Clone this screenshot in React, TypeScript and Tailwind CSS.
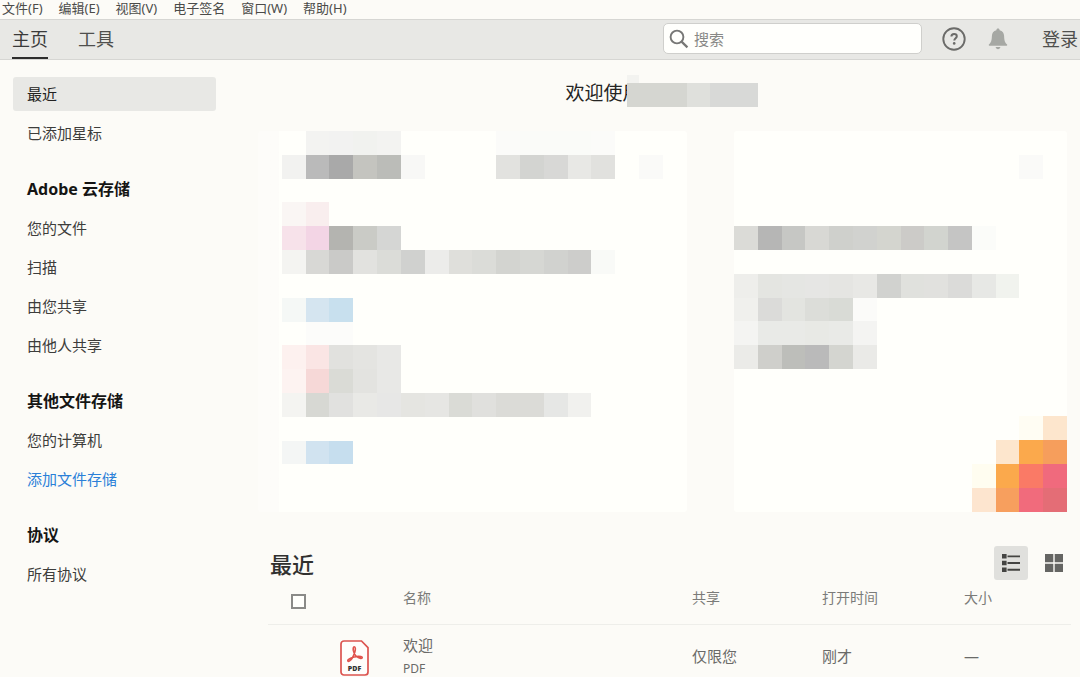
import React from "react";

type Cell = [col: number, row: number, colors: string];

const CELL = 24;

const leftCells: Cell[] = [
  [2, 0, "f3f3f1 f2f2f1 f1f2ef f3f3f1"],
  [10, 0, "fbfbf9 fafbf8 fafbf8 fafbf8 fbfbf9"],
  [1, 1, "f2f2f0 bababa a9a9a9 c4c4bf bbbcb8 f8f8f6"],
  [10, 1, "e2e2df d3d4d1 d8d8d6 e8e8e5 e1e1de"],
  [16, 1, "fafaf8"],
  [1, 3, "faf6f4 f9eeee"],
  [1, 4, "f7e2ea f3d5e5 b4b4b0 cacbc6 d5d6d4"],
  [1, 5, "f4f4f1 d8d8d5 cacac8 e2e2df dbdcd8 d0d1cf ececea dfdfdb dbdcd8 d3d4d0 d6d7d3 d1d2cf cdcdcb f9faf7"],
  [1, 7, "f5f8f6 d5e5f0 c8e0ee"],
  [2, 8, "fcfcfa fcfcfa"],
  [1, 9, "fdf1ef fae5e4 e1e1de e4e4e1 e8e8e6"],
  [1, 10, "fdf3f1 f6d8d7 dadbd6 e3e3e0 e8e8e6"],
  [1, 11, "f4f4f1 d7d8d3 e1e1df e9e9e6 e7e7e6 e5e5e1 e6e6e3 dadbd6 e0e0dd dbdbd7 dbdbd7 e6e7e5 f1f1ee"],
  [1, 13, "f4f6f5 d1e3f0 c6deee"],
];

const rightCells: Cell[] = [
  [12, 1, "fafaf8"],
  [0, 4, "dbdbd7 b6b6b5 c6c7c4 d8d8d4 cfd0cc d1d2cf d4d5cf cccbc8 d2d4cf c5c5c4 fbfcf9"],
  [0, 6, "eeeeeb e4e5e1 e5e6e3 e6e6e4 e5e5e2 e8e8e5 d1d2cf e0e1dd e1e1de dbdbd9 e7e8e5 f1f3ee"],
  [0, 7, "f0f0ed dbdbd9 e3e4e0 dcddd9 d9dbd6 fbfbf9"],
  [0, 8, "f4f4f2 e9eae7 e9eae7 e8e9e5 e9eae7 f4f4f2"],
  [0, 9, "ebebe8 cfcfcb bdbeba bababa d4d5d0 eaeae7"],
  [12, 12, "fffdf3 fde6cd"],
  [11, 13, "fde6cd fba94c f69e5c"],
  [10, 14, "fffdf0 fba94c fa7a66 f06a7d"],
  [10, 15, "fde5cf f79f5e f16b7c e46d76"],
];

function Mosaic({ cells, cols, align, className }: { cells: Cell[]; cols: number; align: string; className: string }) {
  return (
    <svg
      aria-hidden="true"
      viewBox={`0 0 ${cols * CELL} ${16 * CELL}`}
      preserveAspectRatio={align}
      shapeRendering="crispEdges"
      className={className}
    >
      {cells.flatMap(([col, row, colors]) =>
        colors.split(" ").map((c, i) => (
          <rect key={`${col + i}-${row}`} x={(col + i) * CELL} y={row * CELL} width={CELL} height={CELL} fill={`#${c}`} />
        )),
      )}
    </svg>
  );
}

const menus = ["文件(F)", "编辑(E)", "视图(V)", "电子签名", "窗口(W)", "帮助(H)"];

const groups: { title?: string; items: { label: string; active?: boolean; accent?: boolean }[] }[] = [
  { items: [{ label: "最近", active: true }, { label: "已添加星标" }] },
  {
    title: "Adobe 云存储",
    items: [{ label: "您的文件" }, { label: "扫描" }, { label: "由您共享" }, { label: "由他人共享" }],
  },
  { title: "其他文件存储", items: [{ label: "您的计算机" }, { label: "添加文件存储", accent: true }] },
  { title: "协议", items: [{ label: "所有协议" }] },
];

function MenuBar() {
  return (
    <nav aria-label="菜单" className="flex h-[19px] items-center gap-4 pb-[3px] pl-[2px] text-[13px] leading-4 text-[#4b4b49]">
      {menus.map((m) => (
        <button key={m} type="button" className="whitespace-nowrap">
          {m}
        </button>
      ))}
    </nav>
  );
}

function Header() {
  return (
    <header className="flex h-[41px] items-stretch border-y border-[#d6d6d3] bg-[#e8e8e5] pl-3 pr-[2px] text-lg text-[#4f4f4d]">
      <nav aria-label="主导航" className="flex gap-[30px]">
        <a href="#home" aria-current="page" className="border-b-2 border-[#2d2d2c] pt-[5px] text-[#3a3a39]">
          主页
        </a>
        <a href="#tools" className="pt-[5px]">
          工具
        </a>
      </nav>
      <div className="ml-auto flex items-center pb-[2px]">
        <label className="flex h-[31px] w-[259px] items-center gap-[5px] rounded-[5px] border border-[#cfcfcc] bg-[#fffffc] pl-[5px]">
          <svg viewBox="0 0 20 20" className="size-5 shrink-0" fill="none" stroke="#777775" strokeWidth="1.9">
            <circle cx="8" cy="8" r="6.4" />
            <path d="M12.6 12.6 18.4 18.4" strokeWidth="2.2" />
          </svg>
          <input
            type="search"
            aria-label="搜索"
            placeholder="搜索"
            className="w-full min-w-0 bg-transparent text-[15px] leading-5 outline-none placeholder:text-[#888886]"
          />
        </label>
        <button type="button" aria-label="帮助" className="ml-5">
          <svg viewBox="0 0 24 24" className="size-6" fill="none" stroke="#6b6b69">
            <circle cx="12" cy="12" r="10.7" strokeWidth="1.9" />
            <path d="M9.4 9.6c0-1.7 1.1-2.6 2.7-2.6s2.7.9 2.7 2.3c0 2-2.5 2-2.5 4.3" strokeWidth="2" />
            <circle cx="12.2" cy="16.4" r="1.3" fill="#6b6b69" stroke="none" />
          </svg>
        </button>
        <button type="button" aria-label="通知" className="ml-[22px]">
          <svg viewBox="0 0 20 22" className="h-[22px] w-5" fill="#a6a8a4">
            <path d="M10 .6c1 0 1.600.7 1.600 1.600 3 .7 4.400 2.900 4.500 5.700.2 4.600.7 6.200 3 8.700.3.4.1 1.100-.4 1.100H1.300c-.5 0-.7-.7-.4-1.100 2.300-2.500 2.800-4.100 3-8.700.1-2.800 1.500-5 4.500-5.700C8.400 1.300 9 .6 10 .6Z" />
            <path d="M7.600 19h4.800c-.3 1.400-1.200 2.200-2.400 2.200S7.900 20.400 7.600 19Z" />
          </svg>
        </button>
        <button type="button" className="ml-[34px] whitespace-nowrap">
          登录
        </button>
      </div>
    </header>
  );
}

function Sidebar() {
  return (
    <aside className="flex w-[203px] shrink-0 flex-col gap-[22px] text-[15px] leading-5 text-[#3d3d3b]">
      {groups.map((g, i) => (
        <section key={i} className="flex flex-col gap-[5px]">
          {g.title && <h2 className="flex h-[34px] items-center px-[14px] text-base font-bold text-[#151514]">{g.title}</h2>}
          {g.items.map((it) => (
            <a
              key={it.label}
              href="#files"
              className={
                it.active
                  ? "flex h-[34px] items-center rounded-[3px] bg-[#e8e8e5] px-[14px] text-[#222221]"
                  : it.accent
                    ? "flex h-[34px] items-center px-[14px] text-[#2b80d8]"
                    : "flex h-[34px] items-center px-[14px]"
              }
            >
              {it.label}
            </a>
          ))}
        </section>
      ))}
    </aside>
  );
}

function Welcome() {
  return (
    <div className="ml-[-10px] mr-1">
      <h1 className="relative mx-auto h-[34px] w-[194px] whitespace-nowrap text-[19px] leading-8 text-[#242423]">
        欢迎使用
        <svg
          aria-hidden="true"
          viewBox="0 0 131 32"
          shapeRendering="crispEdges"
          className="absolute left-[61px] top-[-2px] h-8 w-[131px]"
        >
          <rect width="12" height="8" fill="#f3f3f0" />
          <rect y="8" width="60" height="24" fill="#d5d6d1" />
          <rect x="60" y="8" width="23" height="24" fill="#dfe0dc" />
          <rect x="83" y="8" width="48" height="24" fill="#d8d9d7" />
        </svg>
      </h1>
      <div className="mt-5 grid grid-cols-[429fr_333fr] gap-[47px]">
        <section aria-label="推荐工具" className="rounded-[3px] bg-gradient-to-r from-[#fdfcf9] from-5% to-[#fffffb] to-5%">
          <Mosaic cells={leftCells} cols={18} align="xMinYMin meet" className="h-[381px] w-full" />
        </section>
        <section aria-label="推荐功能" className="rounded-[3px] bg-[#fffffb]">
          <Mosaic cells={rightCells} cols={14} align="xMaxYMin meet" className="h-[381px] w-full" />
        </section>
      </div>
    </div>
  );
}

function PdfIcon() {
  return (
    <svg viewBox="0 0 29 36" className="h-9 w-[29px]" role="img" aria-label="PDF">
      <path
        d="M4 1h17.500L28 7.600V32a3 3 0 0 1-3 3H4a3 3 0 0 1-3-3V4a3 3 0 0 1 3-3Z"
        fill="#fffdfb"
        stroke="#dc5450"
        strokeWidth="1.700"
      />
      <path
        d="M14.200 6.800c1.500 0 1.400 2.800.5 5.600-1.100 3.400-3.300 7.500-5.400 8.700-1.300.7-2.100-.4-1-1.500 2.400-2.300 8.900-3.700 12.600-3 2 .4 1.700 2-.2 1.800-3.400-.4-6.600-3.500-7.400-8-.3-2.100 0-3.600.9-3.600Z"
        fill="none"
        stroke="#e0524c"
        strokeWidth="1.600"
      />
      <text x="14.500" y="31" textAnchor="middle" fontSize="7" fontWeight="900" fill="#333332" fontFamily="Noto Sans, sans-serif">
        PDF
      </text>
    </svg>
  );
}

function Recent() {
  return (
    <section className="pt-[34px]">
      <div className="flex h-[35px] items-start justify-between pl-[2px]">
        <h2 className="text-[22px] font-medium leading-9 text-[#30302f]">最近</h2>
        <div className="flex gap-[9px]">
          <button type="button" aria-label="列表视图" aria-pressed="true" className="flex size-[34px] items-center justify-center rounded-[3px] bg-[#e0e0dd]">
            <svg viewBox="0 0 18 18" className="size-[18px]" fill="#444442">
              <path d="M0 0h4.600v4.600H0zM0 6.700h4.600v4.600H0zM0 13.400h4.600V18H0zM5.500 1.400H18v1.900H5.500zM5.500 8.100H18V10H5.500zM5.500 14.800H18v1.900H5.500z" />
            </svg>
          </button>
          <button type="button" aria-label="网格视图" className="flex size-[34px] items-center justify-center">
            <svg viewBox="0 0 18 18" className="size-[18px]" fill="#656563">
              <path d="M0 0h8.300v8.300H0zM9.700 0H18v8.300H9.700zM0 9.700h8.300V18H0zM9.700 9.700H18V18H9.700z" />
            </svg>
          </button>
        </div>
      </div>
      <table className="w-full table-fixed text-left text-[#6a6a68]">
        <colgroup>
          <col className="w-[72px]" />
          <col className="w-[63px]" />
          <col />
          <col className="w-[130px]" />
          <col className="w-[142px]" />
          <col className="w-[107px]" />
        </colgroup>
        <thead>
          <tr className="h-[43px] border-b border-[#eeeeea] align-top text-sm text-[#7b7b79]">
            <th className="pl-[23px] pt-[13px]">
              <input
                type="checkbox"
                aria-label="全选"
                className="block size-[15px] appearance-none border-2 border-[#8a8a88] bg-[#fffffc]"
              />
            </th>
            <th aria-label="类型" />
            <th className="pt-[7px] font-normal">名称</th>
            <th className="pt-[7px] font-normal">共享</th>
            <th className="pt-[7px] font-normal">打开时间</th>
            <th className="pt-[7px] font-normal">大小</th>
          </tr>
        </thead>
        <tbody>
          <tr className="align-top text-[15px] leading-6">
            <td />
            <td className="pt-[15px]">
              <PdfIcon />
            </td>
            <td className="pt-2">
              <div className="leading-6">欢迎</div>
              <div className="pt-1 text-xs leading-4">PDF</div>
            </td>
            <td className="pt-[19px]">仅限您</td>
            <td className="pt-[19px]">刚才</td>
            <td className="pt-[19px]">—</td>
          </tr>
        </tbody>
      </table>
    </section>
  );
}

export default function App() {
  return (
    <div className="min-h-screen bg-[#fcfbf7] font-['Noto_Sans','Noto_Sans_CJK_SC',sans-serif]">
      <MenuBar />
      <Header />
      <div className="flex gap-[52px] pl-[13px] pr-[9px] pt-[17px]">
        <Sidebar />
        <main className="min-w-0 flex-1">
          <Welcome />
          <Recent />
        </main>
      </div>
    </div>
  );
}
